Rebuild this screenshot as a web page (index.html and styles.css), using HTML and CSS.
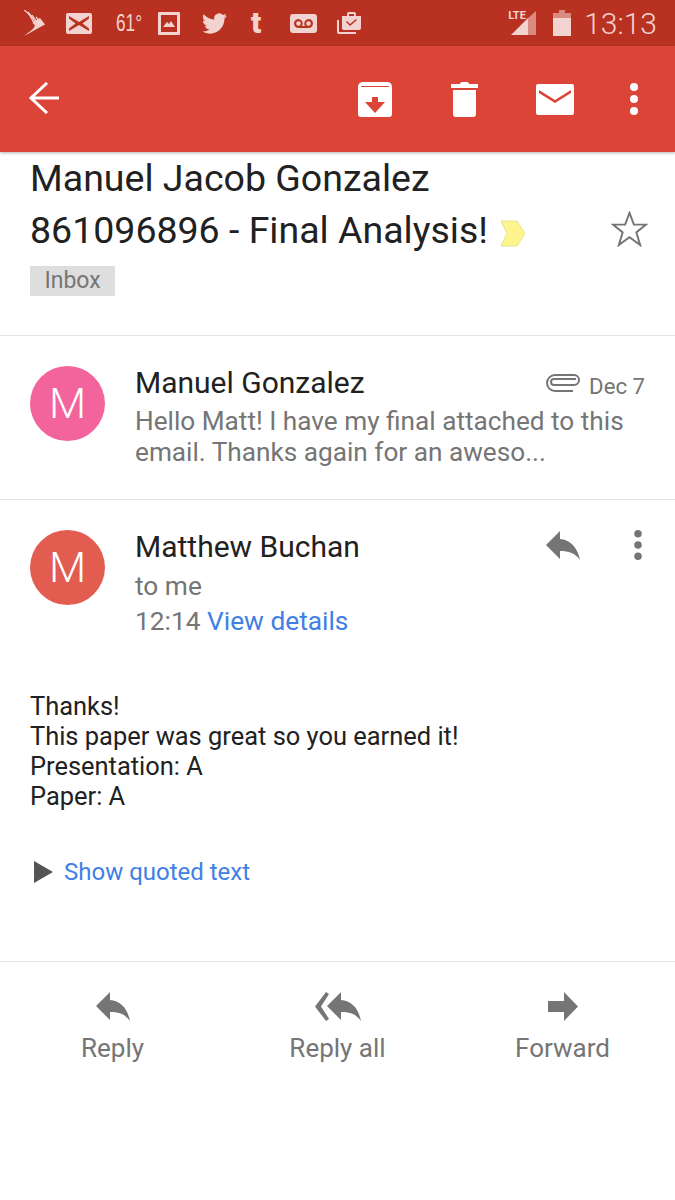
FILE: index.html
```html
<!doctype html>
<html lang="en">

<head>
    <meta charset="UTF-8">
    <title>Gmail</title>
    <link rel="stylesheet" href="styles.css">
</head>

<body>
    <div class="status_bar">
        <div class="status_left">
            <svg class="ic_sprint" viewBox="0 0 21 26"><g fill="none" stroke="#f2d3cf" stroke-width="1.200"><path d="M0 0C5 3 8 8 10 14"/><path d="M4 2C7 5 10 9 12 14"/><path d="M8 5C10 8 12 10 14 14"/><path d="M12 7C14 9 15 11 17 14"/></g><path d="M9 12L16 8L21 14.500C14 18 8 22 0 26C5 22 9 20 11 16Z" fill="#f2d3cf"/></svg>
            <svg class="ic_mail" viewBox="0 0 26 21"><path d="M2 0H24Q26 0 26 2V19Q26 21 24 21H2Q0 21 0 19V2Q0 0 2 0ZM3 3L13 9L23 3V5.500L16.500 10.500L23 15.500V18L13 12L3 18V15.500L9.500 10.500L3 5.500Z" fill="#f2d3cf" fill-rule="evenodd"/></svg>
            <span class="status_temp">61°</span>
            <svg class="ic_pic" viewBox="0 0 22 23"><path d="M1 0H21Q22 0 22 1V22Q22 23 21 23H1Q0 23 0 22V1Q0 0 1 0ZM3 3V20H19V3ZM5 15L9 10L11 12L13 9L17 15Z" fill="#f2d3cf" fill-rule="evenodd"/></svg>
            <svg class="ic_twitter" viewBox="0 0 24 24"><path d="M23.950 4.570a10 10 0 0 1-2.820.770 4.960 4.960 0 0 0 2.160-2.720c-.950.550-2 .960-3.130 1.190a4.920 4.920 0 0 0-8.380 4.480C7.690 8.090 4.070 6.130 1.640 3.160a4.820 4.820 0 0 0-.67 2.480c0 1.710.87 3.210 2.190 4.100a4.900 4.900 0 0 1-2.230-.620v.060a4.920 4.920 0 0 0 3.950 4.830 5 5 0 0 1-2.210.080 4.940 4.940 0 0 0 4.600 3.420A9.870 9.870 0 0 1 0 19.540a14 14 0 0 0 7.560 2.210c9.050 0 14-7.500 14-13.980 0-.210 0-.420-.020-.630a9.940 9.940 0 0 0 2.410-2.570z" fill="#f2d3cf"/></svg>
            <span class="status_t">t</span>
            <svg class="ic_voicemail" viewBox="0 0 27 19"><path d="M3 0H24Q27 0 27 3V16Q27 19 24 19H3Q0 19 0 16V3Q0 0 3 0ZM8.500 5A4.500 4.500 0 0 0 8.500 14H18.500A4.500 4.500 0 0 0 18.500 5A4.500 4.500 0 0 0 15 12H12A4.500 4.500 0 0 0 8.500 5ZM8.500 7.200A2.300 2.300 0 1 1 8.500 11.800A2.300 2.300 0 0 1 8.500 7.200ZM18.500 7.200A2.300 2.300 0 1 1 18.500 11.800A2.300 2.300 0 0 1 18.500 7.200Z" fill="#f2d3cf" fill-rule="evenodd"/></svg>
            <svg class="ic_case" viewBox="0 0 24 23"><path d="M0 8H2V20H19V22H2Q0 22 0 20Z" fill="#f2d3cf"/><path d="M5 4H10V2Q10 0 12 0H17Q19 0 19 2V4H24V16Q24 18 22 18H7Q5 18 5 16ZM12 2V4H17V2ZM9 10L13 14L20 8L19 7L13 12L10 9Z" fill="#f2d3cf" fill-rule="evenodd"/></svg>
        </div>
        <div class="status_right">
            <div class="signal">
                <span class="signal_lte">LTE</span>
                <svg class="ic_signal" viewBox="0 0 25 24"><path d="M0 24L17 7V24Z" fill="#f2d3cf"/><path d="M17 7L25 0V24H17Z" fill="#d98b80"/></svg>
            </div>
            <svg class="ic_battery" viewBox="0 0 18 26"><path d="M6 0H12V3H18V8H0V3H6Z" fill="#d98b80"/><path d="M0 8H18V26H0Z" fill="#f2d3cf"/></svg>
            <span class="status_time">13:13</span>
        </div>
    </div>

    <div class="toolbar">
        <svg class="ic_back" viewBox="0 0 32 32"><path d="M19 1L3 16L19 31M3 16H31" fill="none" stroke="#fff" stroke-width="3"/></svg>
        <svg class="ic_archive" viewBox="0 0 34 35"><path d="M5 0H29Q33 0 34 4V32Q34 35 31 35H3Q0 35 0 32V4Q1 0 5 0ZM3 4V5H31V4ZM14 15V20H7L17 31L27 20H20V15Z" fill="#fff" fill-rule="evenodd"/></svg>
        <svg class="ic_trash" viewBox="0 0 27 35"><path d="M9 2Q9 0 11 0H16Q18 0 18 2H27V6H0V2ZM2 8H25V32Q25 35 22 35H5Q2 35 2 32Z" fill="#fff"/></svg>
        <svg class="ic_envelope" viewBox="0 0 38 31"><path d="M2 0H36Q38 0 38 2V29Q38 31 36 31H2Q0 31 0 29V2Q0 0 2 0ZM3 6V9L19 19L35 9V6L19 16Z" fill="#fff" fill-rule="evenodd"/></svg>
        <svg class="ic_more" viewBox="0 0 8 32"><circle cx="4" cy="4" r="4" fill="#fff"/><circle cx="4" cy="16" r="4" fill="#fff"/><circle cx="4" cy="28" r="4" fill="#fff"/></svg>
    </div>

    <div class="subject">
        <div class="subject_main">
            <h1 class="subject_title">Manuel Jacob Gonzalez<br>861096896 - Final Analysis!<svg class="ic_label" viewBox="0 0 25 27"><path d="M1 1H17L25 13.500L17 26H1L7 13.500Z" fill="#fff58f" stroke="#e9e28c"/></svg></h1>
            <span class="chip">Inbox</span>
        </div>
        <svg class="ic_star" viewBox="0 0 38 37"><path d="M19 2L23.500 14H36L26 22L30 35L19 27L8 35L12 22L2 14H14.500Z" fill="none" stroke="#757575" stroke-width="2"/></svg>
    </div>

    <div class="conv conv_collapsed">
        <div class="avatar avatar_pink">M</div>
        <div class="conv_body">
            <div class="conv_top">
                <span class="sender">Manuel Gonzalez</span>
                <svg class="ic_clip" viewBox="0 0 34 19"><path d="M30 6H8A3 3 0 0 0 8 12H28A5 5 0 0 0 28 2H9A8 8 0 0 0 9 18H27" fill="none" stroke="#757575" stroke-width="2"/></svg>
                <span class="date">Dec 7</span>
            </div>
            <p class="snippet">Hello Matt! I have my final attached to this email. Thanks again for an aweso...</p>
        </div>
    </div>

    <div class="conv conv_open">
        <div class="avatar avatar_red">M</div>
        <div class="conv_body">
            <div class="conv_top">
                <span class="sender">Matthew Buchan</span>
                <svg class="ic_reply_small" viewBox="0 0 34 29"><use href="#reply"/></svg>
                <svg class="ic_more_small" viewBox="0 0 8 32"><circle cx="4" cy="4" r="4" fill="#757575"/><circle cx="4" cy="16" r="4" fill="#757575"/><circle cx="4" cy="28" r="4" fill="#757575"/></svg>
            </div>
            <div class="to_me">to me</div>
            <div class="when">12:14 <a href="#">View details</a></div>
        </div>
    </div>

    <div class="mail_text">
        Thanks!<br>
        This paper was great so you earned it!<br>
        Presentation: A<br>
        Paper: A
    </div>

    <div class="quoted">
        <svg class="ic_tri" viewBox="0 0 19 22"><path d="M0 0L19 11L0 22Z" fill="#555"/></svg>
        <a href="#">Show quoted text</a>
    </div>

    <div class="actions">
        <div class="action">
            <svg class="ic_reply" viewBox="0 0 34 29"><use href="#reply"/></svg>
            <span>Reply</span>
        </div>
        <div class="action">
            <svg class="ic_replyall" viewBox="0 0 46 29"><path d="M11 0L0 14.500L11 29L14 27L6 14.500L14 2Z" fill="#757575"/><use href="#reply" x="12"/></svg>
            <span>Reply all</span>
        </div>
        <div class="action">
            <svg class="ic_forward" viewBox="0 0 30 29"><path d="M0 9H16V0L30 14.500L16 29V20H0Z" fill="#757575"/></svg>
            <span>Forward</span>
        </div>
    </div>

    <svg class="defs" width="0" height="0"><defs><path id="reply" d="M14 0V8C24 9 31 15 34 29C29 22 23 20 14 20V28L0 14Z" fill="#757575"/></defs></svg>
</body>

</html>
```

FILE: styles.css
```css
* {
    margin: 0;
    padding: 0;
    box-sizing: border-box;
}

body {
    width: 675px;
    height: 1200px;
    background-color: #fff;
    font-family: Roboto, "Liberation Sans", sans-serif;
    overflow: hidden;
}

svg {
    display: block;
    flex: none;
}

a {
    text-decoration: none;
    color: #3f80e6;
}

.defs {
    position: absolute;
}

/* status bar */
.status_bar {
    height: 46px;
    background-color: #b93221;
    display: flex;
    justify-content: space-between;
    align-items: center;
    padding: 0 18px 0 24px;
    color: #f2d3cf;
}

.status_left,
.status_right {
    display: flex;
    align-items: center;
}

.ic_sprint {
    width: 21px;
    height: 26px;
}

.ic_mail {
    width: 26px;
    height: 21px;
    margin-left: 21px;
}

.status_temp {
    width: 24px;
    margin-left: 24px;
    font-size: 24px;
    font-family: "Liberation Sans", sans-serif;
    transform: scaleX(.72);
    transform-origin: left;
    white-space: nowrap;
}

.ic_pic {
    width: 22px;
    height: 23px;
    margin-left: 18px;
}

.ic_twitter {
    width: 25px;
    height: 25px;
    margin-left: 22px;
}

.status_t {
    width: 13px;
    margin-left: 24px;
    font-size: 30px;
    font-weight: 900;
    line-height: 1;
}

.ic_voicemail {
    width: 27px;
    height: 19px;
    margin-left: 26px;
}

.ic_case {
    width: 24px;
    height: 23px;
    margin-left: 20px;
}

.signal {
    position: relative;
    width: 25px;
    height: 24px;
}

.ic_signal {
    width: 25px;
    height: 24px;
}

.signal_lte {
    position: absolute;
    top: -2px;
    left: -3px;
    font-size: 11px;
    font-weight: 700;
}

.ic_battery {
    width: 18px;
    height: 26px;
    margin-left: 17px;
}

.status_time {
    margin-left: 13px;
    font-size: 30px;
    font-weight: 300;
}

/* toolbar */
.toolbar {
    height: 106px;
    background-color: #db4437;
    box-shadow: 0 1px 3px rgba(0, 0, 0, .3);
    display: flex;
    align-items: center;
    padding-left: 28px;
    position: relative;
}

.ic_back {
    width: 32px;
    height: 32px;
    margin-top: -2px;
}

.ic_archive {
    width: 34px;
    height: 35px;
    margin-left: 298px;
}

.ic_trash {
    width: 27px;
    height: 35px;
    margin-left: 59px;
}

.ic_envelope {
    width: 38px;
    height: 31px;
    margin-left: 58px;
}

.ic_more {
    width: 8px;
    height: 32px;
    margin-left: 56px;
}

/* subject */
.subject {
    height: 184px;
    padding: 0 27px 0 30px;
    border-bottom: 1px solid #e2e2e2;
    display: flex;
    justify-content: space-between;
    align-items: flex-start;
}

.subject_title {
    font-size: 37.500px;
    font-weight: 400;
    line-height: 52px;
    color: #212121;
}

.ic_label {
    display: inline-block;
    width: 25px;
    height: 27px;
    margin-left: 12px;
    vertical-align: -4px;
}

.chip {
    display: inline-block;
    margin-top: 10px;
    height: 30px;
    padding: 0 14.500px;
    background-color: #dedede;
    color: #757575;
    font-size: 23px;
    line-height: 30px;
}

.ic_star {
    width: 37px;
    height: 36px;
    margin-top: 59px;
}

/* conversation rows */
.conv {
    display: flex;
    align-items: flex-start;
    padding: 30px 30px 0;
}

.conv_collapsed {
    height: 164px;
    border-bottom: 1px solid #e2e2e2;
}

.conv_open {
    height: 180px;
}

.avatar {
    width: 75px;
    height: 75px;
    border-radius: 50%;
    color: #fff;
    font-size: 43px;
    font-weight: 300;
    line-height: 75px;
    text-align: center;
    flex: none;
}

.avatar_pink {
    background-color: #f4649c;
}

.avatar_red {
    background-color: #e25c50;
}

.conv_body {
    flex: 1;
    margin-left: 30px;
}

.conv_top {
    display: flex;
    align-items: center;
    height: 36px;
}

.sender {
    flex: 1;
    margin-top: -3px;
    font-size: 30px;
    color: #212121;
}

.ic_clip {
    width: 34px;
    height: 19px;
    margin: -4px 9px 0 0;
}

.date {
    margin-top: 4px;
    font-size: 22.200px;
    color: #757575;
}

.snippet {
    font-size: 26.200px;
    line-height: 31px;
    color: #757575;
    margin-top: 4px;
}

.ic_reply_small {
    width: 34px;
    height: 29px;
    margin-top: -5px;
}

.ic_more_small {
    width: 8px;
    height: 30px;
    margin: -6px 3px 0 54px;
}

.to_me,
.when {
    font-size: 26.300px;
    line-height: 35px;
    color: #757575;
}

.to_me {
    margin-top: 3px;
}

/* mail body */
.mail_text {
    padding: 11px 30px 0;
    font-size: 25.450px;
    line-height: 30px;
    color: #212121;
}

.quoted {
    display: flex;
    align-items: center;
    gap: 11px;
    padding: 0 0 0 34px;
    margin-top: 41px;
    height: 40px;
    font-size: 24px;
}

.ic_tri {
    width: 19px;
    height: 22px;
}

/* bottom actions */
.actions {
    margin-top: 69px;
    border-top: 1px solid #e2e2e2;
    display: flex;
    justify-content: space-between;
    padding-top: 30px;
}

.action {
    width: 225px;
    display: flex;
    flex-direction: column;
    align-items: center;
    gap: 11px;
    font-size: 26px;
    line-height: 32px;
    color: #757575;
}

.ic_reply {
    width: 34px;
    height: 29px;
}

.ic_replyall {
    width: 46px;
    height: 29px;
}

.ic_forward {
    width: 30px;
    height: 29px;
}
```
